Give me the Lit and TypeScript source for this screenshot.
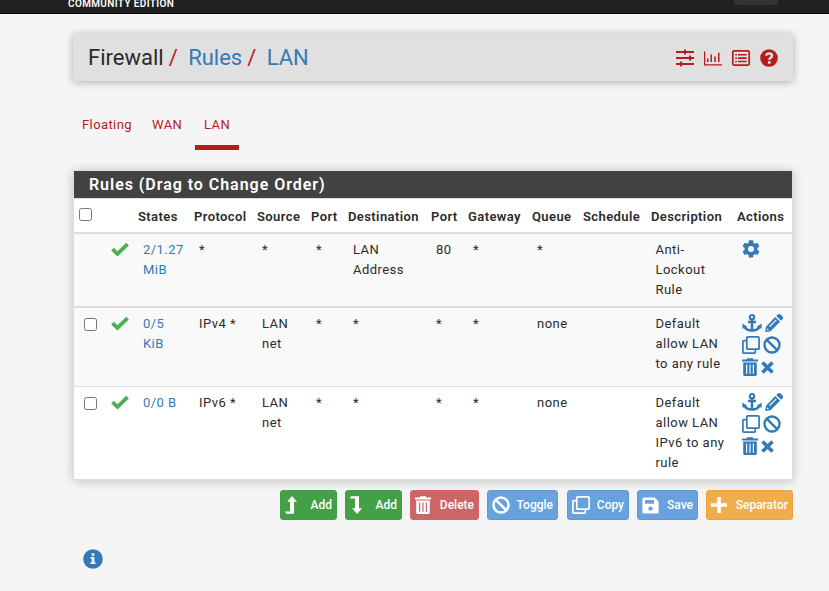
import { LitElement, html, svg, css, nothing } from "lit";
import { customElement, property } from "lit/decorators.js";

interface Glyph {
  w: number;
  h: number;
  body: unknown;
}

const glyphs: Record<string, Glyph> = {
  sliders: {
    w: 18, h: 16,
    body: svg`<path d="M0 1h18v2H0zM0 7h18v2H0zM0 13h18v2H0zM8-.5h2v5H8zM13 5.5h2v5h-2zM4 11.5h2v5H4z"/>`,
  },
  chart: {
    w: 18, h: 15,
    body: svg`<path d="M0 .5h1.3v12.8H18v1.3H0zM3 7.5h1.5V11H3zM6.5 3.5H8V11H6.5zM10.3 5.5h1.5V11h-1.5zM14 1.7h1.5V11H14z"/>`,
  },
  list: {
    w: 18, h: 16,
    body: svg`<rect x=".8" y=".9" width="16.4" height="14.2" rx="1.3" fill="none" stroke="currentColor" stroke-width="1.7"/><path d="M3.3 3.9h1.6v1.6H3.3zM3.3 7.3h1.6v1.6H3.3zM3.3 10.7h1.6v1.6H3.3zM6 3.9h8.6v1.6H6zM6 7.3h8.6v1.6H6zM6 10.7h8.6v1.6H6z"/>`,
  },
  help: {
    w: 18, h: 18,
    body: svg`<circle cx="9" cy="9" r="8.8"/><path d="M6 6.6C6.500 5 7.600 4.400 9.100 4.400c1.700 0 2.900 .9 2.900 2.300 0 2-2.700 2-2.700 4" fill="none" stroke="#e0e0e0" stroke-width="2.500"/><path d="M7.900 12.100h2.700v2.600H7.900z" fill="#e0e0e0"/>`,
  },
  check: {
    w: 18, h: 13,
    body: svg`<path d="M1.500 6.200 6.400 10.900 16.600 1.200" fill="none" stroke="currentColor" stroke-width="3.800"/>`,
  },
  cog: {
    w: 18, h: 18,
    body: svg`<path fill-rule="evenodd" d="M7 .3h4l.5 2.500 1.500.9 2.400-.9 2 3.400-2 1.700v1.900l2 1.700-2 3.500-2.400-.9-1.500.9-.5 2.600H7L6.500 15l-1.500-.9-2.400.9-2-3.500 2-1.700V7.900l-2-1.700 2-3.400 2.400.9 1.500-.9zM9 6a3 3 0 1 0 0 6 3 3 0 0 0 0-6z"/>`,
  },
  anchor: {
    w: 20, h: 18,
    body: svg`<path d="M10 6v10.500M6 8h8M2.500 12.500c1 2.700 3.800 4 7.500 4s6.500-1.300 7.500-4" fill="none" stroke="currentColor" stroke-width="2.500"/><circle cx="10" cy="3.200" r="2.200" fill="none" stroke="currentColor" stroke-width="2.100"/><path d="M.4 14.700V9.400L5.600 13zM19.600 14.700V9.400L14.400 13z"/>`,
  },
  pencil: {
    w: 18, h: 18,
    body: svg`<path fill-rule="evenodd" d="M10.200 2.900l4.900 4.900L5.500 17.200.2 18l.8-5.300zM2.200 14.200l-.3 2.100 2.100-.4zM4.200 12.100l.8.8 6.700-6.700-.8-.8zM11.200 1.900l1.600-1.400c.8-.8 2-.8 2.800 0l1.900 1.900c.8.8.8 2 0 2.800l-1.400 1.600z"/>`,
  },
  clone: {
    w: 18, h: 18,
    body: svg`<rect x="4.800" y=".9" width="12.300" height="12.300" rx="1" fill="none" stroke="currentColor" stroke-width="1.700"/><path d="M4.500 4.700H1.800a.9.9 0 0 0-.9.900v10.600c0 .5.400.9.900.9h10.600c.5 0 .9-.4.900-.9v-3" fill="none" stroke="currentColor" stroke-width="1.700"/>`,
  },
  ban: {
    w: 18, h: 18,
    body: svg`<circle cx="9" cy="9" r="7.500" fill="none" stroke="currentColor" stroke-width="2.400"/><path d="M3.800 3.800l10.400 10.400" stroke="currentColor" stroke-width="2.400"/>`,
  },
  trash: {
    w: 16, h: 18,
    body: svg`<path fill-rule="evenodd" d="M5.300.2h5.400l.7 1.400H16v2H0v-2h4.600zM1.200 4.600h13.600V16.400c0 .9-.6 1.500-1.500 1.500H2.700c-.9 0-1.500-.6-1.500-1.500zM4 6.500v9.200h1.200V6.500zM7.400 6.500v9.200h1.200V6.500zM10.800 6.500v9.200H12V6.500z"/>`,
  },
  times: {
    w: 13, h: 13,
    body: svg`<path d="M1.500 1.500l10 10M11.500 1.500l-10 10" stroke="currentColor" stroke-width="3.600"/>`,
  },
  up: {
    w: 12, h: 18,
    body: svg`<path d="M7 0l5 5.700H9v12.100H1.200L0 15.500h5V5.700H2.200z"/>`,
  },
  down: {
    w: 12, h: 18,
    body: svg`<path d="M7 18l5-5.700H9V.2H.8L0 2.500h5v9.800H2.200z"/>`,
  },
  save: {
    w: 17, h: 17,
    body: svg`<path fill-rule="evenodd" d="M2 .4h10.700L16.600 4.400V15c0 .9-.7 1.600-1.600 1.600H2C1.100 16.600.4 15.900.4 15V2C.4 1.100 1.100.4 2 .4zM3 3v3.700h9V3zM8.500 9.400a2.200 2.200 0 1 0 0 4.400 2.200 2.200 0 0 0 0-4.400z"/>`,
  },
  plus: {
    w: 16, h: 16,
    body: svg`<path d="M6.200 0h3.600v6.200H16v3.600H9.800V16H6.200V9.800H0V6.200h6.200z"/>`,
  },
  info: {
    w: 20, h: 20,
    body: svg`<circle cx="10" cy="10" r="9.800"/><path d="M8.700 4.300h2.700v2.500H8.700zM7.600 8h3.800v5.200h1.100v1.700H7.500v-1.700h1.200V9.700H7.600z" fill="#f5f5f5"/>`,
  },
};

@customElement("ui-icon")
export class UiIcon extends LitElement {
  @property() name = "";
  static styles = css`
    :host { display: inline-flex; flex: none; }
    svg { display: block; overflow: visible; fill: currentColor; }
  `;
  render() {
    const g = glyphs[this.name];
    return g
      ? html`<svg width=${g.w} height=${g.h} viewBox="0 0 ${g.w} ${g.h}">${g.body}</svg>`
      : nothing;
  }
}

const columns = ["", "States", "Protocol", "Source", "Port", "Destination", "Port", "Gateway", "Queue", "Schedule", "Description", "Actions"];

interface Rule {
  kind: string;
  lockout?: boolean;
  cells: string[];
}

const rules: Rule[] = [
  { kind: "first", lockout: true, cells: ["2/1.27 MiB", "*", "*", "*", "LAN Address", "80", "*", "*", "", "Anti-Lockout Rule"] },
  { kind: "second", cells: ["0/5 KiB", "IPv4 *", "LAN net", "*", "*", "*", "*", "none", "", "Default allow LAN to any rule"] },
  { kind: "third", cells: ["0/0 B", "IPv6 *", "LAN net", "*", "*", "*", "*", "none", "", "Default allow LAN IPv6 to any rule"] },
];

const buttons = [
  { label: "Add", icon: "up", kind: "add" },
  { label: "Add", icon: "down", kind: "add" },
  { label: "Delete", icon: "trash", kind: "delete" },
  { label: "Toggle", icon: "ban", kind: "toggle" },
  { label: "Copy", icon: "clone", kind: "copy" },
  { label: "Save", icon: "save", kind: "save" },
  { label: "Separator", icon: "plus", kind: "separator" },
];

@customElement("app-root")
export class AppRoot extends LitElement {
  static styles = css`
    :host {
      display: block; height: 591px; overflow: hidden; background: #f5f5f5;
      font: 400 13px/20px Roboto, sans-serif; letter-spacing: 0.46px; color: #2b2b2b;
    }
    * { box-sizing: border-box; }
    .topbar {
      height: 14px; background: #212121; border-bottom: 1px solid #000;
      display: flex; justify-content: space-between; padding: 0 51px 0 68px;
    }
    .edition { color: #fff; font-size: 10px; font-weight: 600; line-height: 8px; height: 8px; letter-spacing: 0.36px; white-space: nowrap; }
    .toggle { width: 44px; height: 5px; background: #333; border-radius: 0 0 3px 3px; }
    .page { padding: 20px 36px 0 73px; }
    .heading {
      height: 47px; width: 720px; background: #e0e0e0; border-radius: 2px;
      box-shadow: 0 1px 8px rgba(0, 0, 0, 0.3);
      display: flex; align-items: center; justify-content: space-between; padding: 0 15px;
    }
    .crumbs { display: flex; font-size: 22px; line-height: 30px; letter-spacing: 0; white-space: pre; margin-top: 1px; }
    .slash { color: #b71c1c; width: 19.5px; margin-left: 5px; }
    .link { color: #337ab7; }
    .tools { display: flex; gap: 10px; color: #b71c1c; align-items: center; margin-top: 1px; }
    .tabs { display: flex; margin-top: 28px; height: 41px; color: #b71c1c; }
    .tab { width: 70px; padding: 6px 0 0 9px; border-bottom: 5px solid transparent; letter-spacing: 0.4px; }
    .tab.wan { width: 52px; }
    .tab.active { width: 44px; border-color: #b71c1c; }
    .panel {
      margin-top: 20px; width: 720px; border: 1px solid #ddd; background: #fff;
      box-shadow: 0 1px 10px rgba(0, 0, 0, 0.22);
    }
    .title {
      height: 28px; background: #424242; color: #fff; border-bottom: 1px solid #ddd;
      padding: 0 15px; font-size: 16px; line-height: 27px; font-weight: 600; letter-spacing: 0.96px;
    }
    .row { display: grid; grid-template-columns: 27px 32px 56px 63px 54px 37px 83px 37px 64px 51px 68px 86px 60px; }
    .head { height: 35px; border-bottom: 2px solid #ddd; font-weight: 600; letter-spacing: 0.4px; }
    .head .cell { padding: 8px 0 0 5px; white-space: nowrap; }
    .head .tick { padding-top: 9px; }
    .cell { padding: 6px 2px 0 10px; }
    .first { height: 74px; border-bottom: 2px solid #ddd; background: #f9f9f9; }
    .second { height: 79px; border-bottom: 1px solid #ddd; background: #f9f9f9; }
    .third { height: 92px; }
    .tick { padding: 10px 0 0 10px; }
    input { appearance: none; display: block; width: 13px; height: 13px; margin: 0; border: 1px solid #767676; border-radius: 2.5px; background: #fff; }
    .pass { display: flex; align-items: flex-start; color: #4caf50; padding-top: 8.5px; }
    .desc { padding-right: 0; padding-left: 9.5px; }
    .actions {
      color: #337ab7; display: flex; flex-direction: column; padding: 4px 0 0 10px;
    }
    .pair { display: flex; align-items: center; gap: 3px; height: 22px; }
    .buttons { display: flex; gap: 8px; justify-content: flex-end; width: 720px; margin-top: 10px; }
    .button {
      height: 30px; display: flex; justify-content: space-between; align-items: center; padding: 0 4px;
      border: 1px solid; border-radius: 3px; color: #fff; font: 500 12px/18px Roboto, sans-serif; letter-spacing: 0;
    }
    .add { width: 57px; background: #43a047; border-color: #3fa044; }
    .delete { width: 69px; background: #cc6666; border-color: #d86464; }
    .toggle-btn, .copy, .save { background: #67a2de; border-color: #5b9bd5; }
    .toggle-btn { width: 71px; margin-right: 1px; }
    .copy { width: 62px; }
    .save { width: 61px; }
    .separator { width: 87px; background: #f0ad4e; border-color: #eea236; }
    .info { display: flex; color: #337ab7; margin: 29px 0 0 10px; }
  `;

  private actions(rule: Rule) {
    return rule.lockout
      ? html`<div class="pair"><ui-icon name="cog"></ui-icon></div>`
      : html`
          <div class="pair"><ui-icon name="anchor"></ui-icon><ui-icon name="pencil"></ui-icon></div>
          <div class="pair"><ui-icon name="clone"></ui-icon><ui-icon name="ban"></ui-icon></div>
          <div class="pair"><ui-icon name="trash"></ui-icon><ui-icon name="times"></ui-icon></div>`;
  }

  render() {
    return html`
      <div class="topbar"><div class="edition">COMMUNITY EDITION</div><div class="toggle"></div></div>
      <main class="page">
        <header class="heading">
          <div class="crumbs">
            <span>Firewall</span><span class="slash">/</span><span class="link">Rules</span><span class="slash">/</span><span class="link">LAN</span>
          </div>
          <div class="tools">${["sliders", "chart", "list", "help"].map((n) => html`<ui-icon name=${n}></ui-icon>`)}</div>
        </header>
        <nav class="tabs">
          <div class="tab">Floating</div><div class="tab wan">WAN</div><div class="tab active">LAN</div>
        </nav>
        <section class="panel">
          <div class="title">Rules (Drag to Change Order)</div>
          <div class="row head">
            <div class="cell tick"><input type="checkbox" /></div>
            ${columns.map((c) => html`<div class="cell">${c}</div>`)}
          </div>
          ${rules.map((r) => html`
            <div class="row ${r.kind}">
              <div class="cell tick">${r.lockout ? nothing : html`<input type="checkbox" />`}</div>
              <div class="cell pass"><ui-icon name="check"></ui-icon></div>
              ${r.cells.map((c, i) => html`<div class="cell ${i === 0 ? "link" : i === 9 ? "desc" : ""}">${c}</div>`)}
              <div class="actions">${this.actions(r)}</div>
            </div>`)}
        </section>
        <div class="buttons">
          ${buttons.map((b) => html`<div class="button ${b.kind === "toggle" ? "toggle-btn" : b.kind}"><ui-icon name=${b.icon}></ui-icon><span>${b.label}</span></div>`)}
        </div>
        <div class="info"><ui-icon name="info"></ui-icon></div>
      </main>`;
  }
}
